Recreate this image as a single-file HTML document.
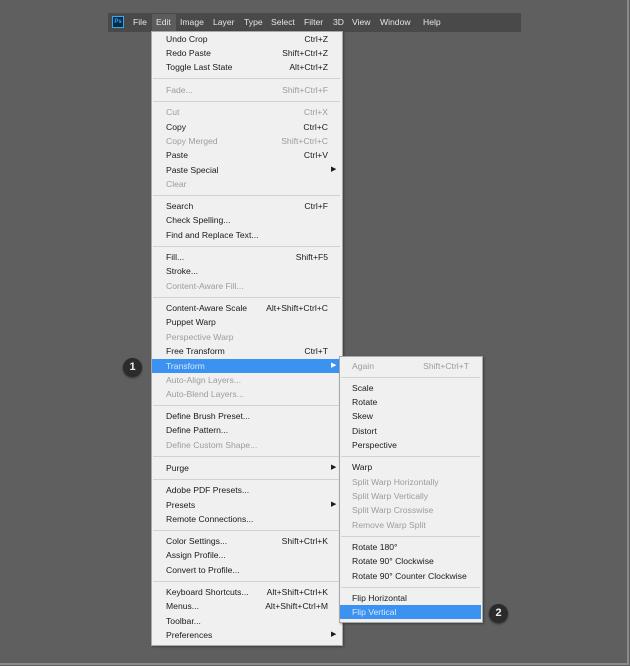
<!DOCTYPE html>
<html><head><meta charset="utf-8"><style>
html,body{margin:0;padding:0}
body{width:630px;height:666px;background:#5f5f5f;position:relative;overflow:hidden;font-family:"Liberation Sans",sans-serif;font-size:8.6px;color:#1a1a1a}
.frame{position:absolute;left:0;top:0;width:627px;height:663px;border-right:2px solid #8a8a8a;border-bottom:2px solid #8a8a8a}
.bar{position:absolute;left:108px;top:13px;width:413px;height:19px;background:#494949}
.bar span{position:absolute;top:4px;color:#e6e6e6;font-size:8.6px}
.ps{position:absolute;left:112px;top:16px;width:10px;height:10px;background:#0a2a3c;border:1px solid #31a8ff;color:#31a8ff;font-size:6px;line-height:10px;text-align:center;font-weight:bold}
.menu{position:absolute;background:#f0f0f0;border:1px solid #a8a8a8;box-shadow:1px 1px 2px rgba(0,0,0,.35)}
.i{position:absolute;height:14px;line-height:14px;white-space:nowrap}
.d{color:#9c9c9c}
.k{position:absolute;height:14px;line-height:14px;text-align:right;white-space:nowrap}
.s{position:absolute;height:1px;background:#d2d2d2}
.hl{position:absolute;height:14px;background:#3b92f0}
.c{position:absolute;width:19px;height:19px;border-radius:50%;background:#2b2b2b;color:#eee;font-weight:bold;font-size:11px;line-height:19px;text-align:center;box-shadow:0 1px 2px rgba(0,0,0,.5)}
.ar{position:absolute;font-size:7px;line-height:14px;height:14px}
</style></head><body>
<div class="frame"></div>
<div class="bar"></div>
<div class="ps">Ps</div>
<div style="position:absolute;left:152px;top:14px;width:24px;height:18px;background:#5c5c5c"></div>
<span style="position:absolute;top:17px;left:133px;color:#e6e6e6">File</span>
<span style="position:absolute;top:17px;left:156px;color:#e6e6e6">Edit</span>
<span style="position:absolute;top:17px;left:180px;color:#e6e6e6">Image</span>
<span style="position:absolute;top:17px;left:213px;color:#e6e6e6">Layer</span>
<span style="position:absolute;top:17px;left:244px;color:#e6e6e6">Type</span>
<span style="position:absolute;top:17px;left:271px;color:#e6e6e6">Select</span>
<span style="position:absolute;top:17px;left:304px;color:#e6e6e6">Filter</span>
<span style="position:absolute;top:17px;left:333px;color:#e6e6e6">3D</span>
<span style="position:absolute;top:17px;left:352px;color:#e6e6e6">View</span>
<span style="position:absolute;top:17px;left:380px;color:#e6e6e6">Window</span>
<span style="position:absolute;top:17px;left:423px;color:#e6e6e6">Help</span>

<div class="menu" style="left:151px;top:31px;width:190px;height:613px"></div>
<div class="hl" style="left:152px;top:359px;width:189px"></div>

<div class="i" style="left:166px;top:32px">Undo Crop</div><div class="k" style="right:302px;top:32px">Ctrl+Z</div>
<div class="i" style="left:166px;top:46px">Redo Paste</div><div class="k" style="right:302px;top:46px">Shift+Ctrl+Z</div>
<div class="i" style="left:166px;top:60px">Toggle Last State</div><div class="k" style="right:302px;top:60px">Alt+Ctrl+Z</div>
<div class="s" style="left:153px;width:187px;top:78px"></div>
<div class="i d" style="left:166px;top:83px">Fade...</div><div class="k d" style="right:302px;top:83px">Shift+Ctrl+F</div>
<div class="s" style="left:153px;width:187px;top:101px"></div>
<div class="i d" style="left:166px;top:105px">Cut</div><div class="k d" style="right:302px;top:105px">Ctrl+X</div>
<div class="i" style="left:166px;top:120px">Copy</div><div class="k" style="right:302px;top:120px">Ctrl+C</div>
<div class="i d" style="left:166px;top:134px">Copy Merged</div><div class="k d" style="right:302px;top:134px">Shift+Ctrl+C</div>
<div class="i" style="left:166px;top:148px">Paste</div><div class="k" style="right:302px;top:148px">Ctrl+V</div>
<div class="i" style="left:166px;top:163px">Paste Special</div><div class="ar" style="left:331px;top:163px">▶</div>
<div class="i d" style="left:166px;top:177px">Clear</div>
<div class="s" style="left:153px;width:187px;top:195px"></div>
<div class="i" style="left:166px;top:199px">Search</div><div class="k" style="right:302px;top:199px">Ctrl+F</div>
<div class="i" style="left:166px;top:213px">Check Spelling...</div>
<div class="i" style="left:166px;top:228px">Find and Replace Text...</div>
<div class="s" style="left:153px;width:187px;top:246px"></div>
<div class="i" style="left:166px;top:250px">Fill...</div><div class="k" style="right:302px;top:250px">Shift+F5</div>
<div class="i" style="left:166px;top:264px">Stroke...</div>
<div class="i d" style="left:166px;top:279px">Content-Aware Fill...</div>
<div class="s" style="left:153px;width:187px;top:297px"></div>
<div class="i" style="left:166px;top:301px">Content-Aware Scale</div><div class="k" style="right:302px;top:301px">Alt+Shift+Ctrl+C</div>
<div class="i" style="left:166px;top:315px">Puppet Warp</div>
<div class="i d" style="left:166px;top:330px">Perspective Warp</div>
<div class="i" style="left:166px;top:344px">Free Transform</div><div class="k" style="right:302px;top:344px">Ctrl+T</div>
<div class="i" style="left:166px;top:359px;color:#d8e8ff">Transform</div><div class="ar" style="left:331px;top:359px;color:#fff">▶</div>
<div class="i d" style="left:166px;top:373px">Auto-Align Layers...</div>
<div class="i d" style="left:166px;top:387px">Auto-Blend Layers...</div>
<div class="s" style="left:153px;width:187px;top:405px"></div>
<div class="i" style="left:166px;top:409px">Define Brush Preset...</div>
<div class="i" style="left:166px;top:423px">Define Pattern...</div>
<div class="i d" style="left:166px;top:438px">Define Custom Shape...</div>
<div class="s" style="left:153px;width:187px;top:456px"></div>
<div class="i" style="left:166px;top:461px">Purge</div><div class="ar" style="left:331px;top:461px">▶</div>
<div class="s" style="left:153px;width:187px;top:479px"></div>
<div class="i" style="left:166px;top:483px">Adobe PDF Presets...</div>
<div class="i" style="left:166px;top:498px">Presets</div><div class="ar" style="left:331px;top:498px">▶</div>
<div class="i" style="left:166px;top:512px">Remote Connections...</div>
<div class="s" style="left:153px;width:187px;top:530px"></div>
<div class="i" style="left:166px;top:534px">Color Settings...</div><div class="k" style="right:302px;top:534px">Shift+Ctrl+K</div>
<div class="i" style="left:166px;top:548px">Assign Profile...</div>
<div class="i" style="left:166px;top:563px">Convert to Profile...</div>
<div class="s" style="left:153px;width:187px;top:581px"></div>
<div class="i" style="left:166px;top:585px">Keyboard Shortcuts...</div><div class="k" style="right:302px;top:585px">Alt+Shift+Ctrl+K</div>
<div class="i" style="left:166px;top:599px">Menus...</div><div class="k" style="right:302px;top:599px">Alt+Shift+Ctrl+M</div>
<div class="i" style="left:166px;top:614px">Toolbar...</div>
<div class="i" style="left:166px;top:628px">Preferences</div><div class="ar" style="left:331px;top:628px">▶</div>

<div class="menu" style="left:339px;top:356px;width:142px;height:265px"></div>
<div class="hl" style="left:340px;top:605px;width:141px"></div>
<div class="i d" style="left:352px;top:359px">Again</div><div class="k d" style="right:161px;top:359px">Shift+Ctrl+T</div>
<div class="s" style="left:341px;width:139px;top:377px"></div>
<div class="i" style="left:352px;top:381px">Scale</div>
<div class="i" style="left:352px;top:395px">Rotate</div>
<div class="i" style="left:352px;top:409px">Skew</div>
<div class="i" style="left:352px;top:424px">Distort</div>
<div class="i" style="left:352px;top:438px">Perspective</div>
<div class="s" style="left:341px;width:139px;top:456px"></div>
<div class="i" style="left:352px;top:460px">Warp</div>
<div class="i d" style="left:352px;top:475px">Split Warp Horizontally</div>
<div class="i d" style="left:352px;top:489px">Split Warp Vertically</div>
<div class="i d" style="left:352px;top:503px">Split Warp Crosswise</div>
<div class="i d" style="left:352px;top:518px">Remove Warp Split</div>
<div class="s" style="left:341px;width:139px;top:536px"></div>
<div class="i" style="left:352px;top:540px">Rotate 180°</div>
<div class="i" style="left:352px;top:554px">Rotate 90° Clockwise</div>
<div class="i" style="left:352px;top:569px">Rotate 90° Counter Clockwise</div>
<div class="s" style="left:341px;width:139px;top:587px"></div>
<div class="i" style="left:352px;top:591px">Flip Horizontal</div>
<div class="i" style="left:352px;top:605px;color:#d8e8ff">Flip Vertical</div>

<div class="c" style="left:123px;top:358px">1</div>
<div class="c" style="left:489px;top:604px">2</div>
</body></html>
